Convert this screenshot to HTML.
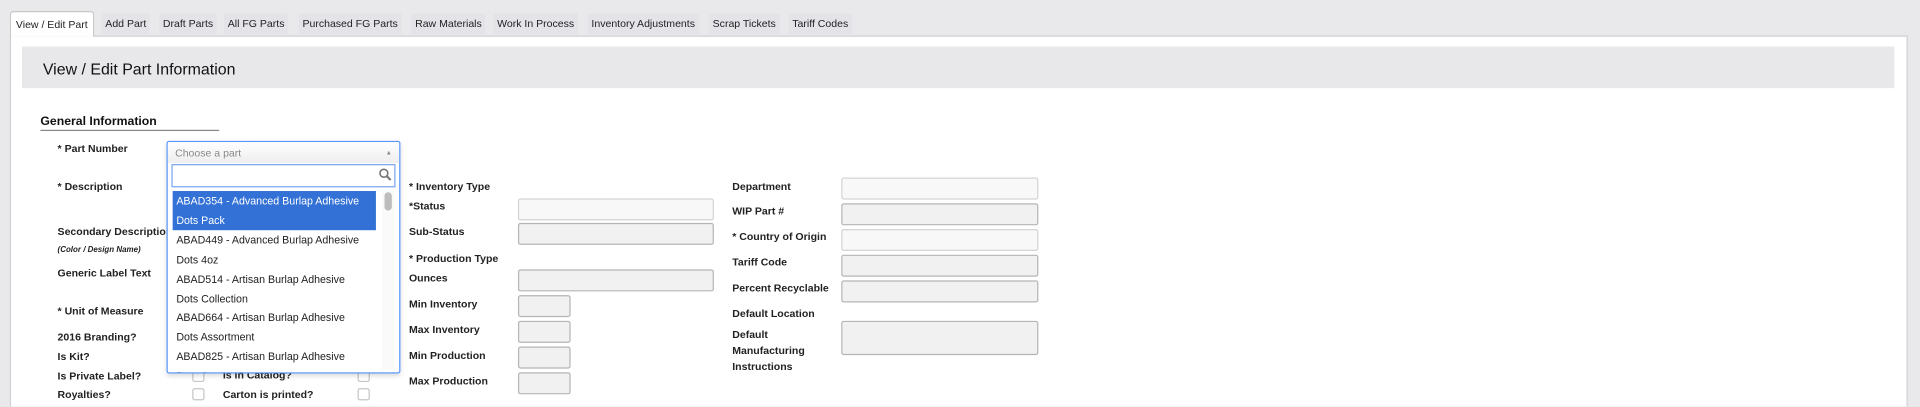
<!DOCTYPE html>
<html><head><meta charset="utf-8"><style>
html,body{margin:0;padding:0;width:1920px;height:407px;overflow:hidden;background:#e9e9ec;font-family:"Liberation Sans",Arial,sans-serif;}
#s{position:absolute;left:0;top:0;width:1568px;height:332px;overflow:hidden;transform:scale(1.2245);transform-origin:0 0;}
.a{position:absolute;white-space:nowrap;}
.tab{position:absolute;top:11px;height:17px;font-size:8.6px;line-height:17px;color:#222;background:#e4e4e8;padding:0 3px;}
.tab.act{background:#fff;border:1px solid #c8c8c8;border-bottom:none;top:9px;height:20px;line-height:20px;border-radius:3px 3px 0 0;}
.panel{position:absolute;left:8px;top:29px;width:1548px;height:310px;background:#fff;border:1px solid #cfcfd3;border-bottom:none;}
.l{position:absolute;font-size:8.6px;font-weight:bold;color:#222;white-space:nowrap;}
.in{position:absolute;height:16px;border:1px solid #b5b5b5;border-radius:2px;background:#f1f1f1;}
.in.lt{background:#f8f8f8;border-color:#d4d4d4;}
.cb{position:absolute;width:8px;height:8px;border:1px solid #c6c6c6;border-radius:2px;background:#fff;}
.it{position:absolute;left:4px;width:163px;font-size:8.7px;color:#222;line-height:16px;padding-left:3px;}
</style></head><body><div id="s">
<div class="panel"></div>
<div class="tab act" style="left:8px;padding:0 4px;">View / Edit Part</div>
<div class="tab" style="left:83px">Add Part</div>
<div class="tab" style="left:130px">Draft Parts</div>
<div class="tab" style="left:183px">All FG Parts</div>
<div class="tab" style="left:244px">Purchased FG Parts</div>
<div class="tab" style="left:336px">Raw Materials</div>
<div class="tab" style="left:403px">Work In Process</div>
<div class="tab" style="left:480px">Inventory Adjustments</div>
<div class="tab" style="left:579px">Scrap Tickets</div>
<div class="tab" style="left:644px">Tariff Codes</div>

<div class="a" style="left:18px;top:38px;width:1529px;height:34px;background:#e8e8eb;"></div>
<div class="a" style="left:35px;top:49px;font-size:13px;color:#111;">View / Edit Part Information</div>

<div class="a" style="left:33px;top:94px;font-size:10px;font-weight:bold;color:#111;">General Information</div>
<div class="a" style="left:33px;top:106px;width:146px;height:1px;background:#888;"></div>

<div class="l" style="left:47px;top:116px">* Part Number</div>
<div class="l" style="left:47px;top:147px">* Description</div>
<div class="l" style="left:47px;top:184px">Secondary Description</div>
<div class="l" style="left:47px;top:201px;font-size:6.5px;font-style:italic">(Color / Design Name)</div>
<div class="l" style="left:47px;top:218px">Generic Label Text</div>
<div class="l" style="left:47px;top:249px">* Unit of Measure</div>
<div class="l" style="left:47px;top:270px">2016 Branding?</div>
<div class="l" style="left:47px;top:286px">Is Kit?</div>
<div class="l" style="left:47px;top:302px">Is Private Label?</div>
<div class="l" style="left:47px;top:317px">Royalties?</div>
<div class="cb" style="left:157px;top:302px"></div><div class="cb" style="left:157px;top:317px"></div>
<div class="l" style="left:182px;top:301px">Is in Catalog?</div>
<div class="l" style="left:182px;top:317px">Carton is printed?</div>
<div class="cb" style="left:292px;top:302px"></div><div class="cb" style="left:292px;top:317px"></div>

<div class="a" style="left:136px;top:115px;width:189px;height:188px;background:#fff;border:1px solid #5897fb;border-radius:2px;box-shadow:0 2px 4px rgba(0,0,0,.15);overflow:hidden;">
 <div class="a" style="left:0;top:0;width:189px;height:17px;background:linear-gradient(#fff,#eee);"></div>
 <div class="a" style="left:6px;top:4px;font-size:8.6px;color:#888;">Choose a part</div>
 <div class="a" style="left:178px;top:6px;font-size:5px;color:#888;">▲</div>
 <div class="a" style="left:3px;top:18px;width:181px;height:17px;border:1px solid #7aa6ef;background:#fff;"></div>
 <svg class="a" style="left:172px;top:21px" width="11" height="11" viewBox="0 0 11 11"><circle cx="4.5" cy="4.5" r="3.2" fill="none" stroke="#777" stroke-width="1.3"/><path d="M7 7l3 3" stroke="#777" stroke-width="1.8"/></svg>
 <div class="it" style="top:40px;height:32px;background:#3371d6;color:#fff;">ABAD354 - Advanced Burlap Adhesive<br>Dots Pack</div>
 <div class="it" style="top:72px">ABAD449 - Advanced Burlap Adhesive<br>Dots 4oz</div>
 <div class="it" style="top:104px">ABAD514 - Artisan Burlap Adhesive<br>Dots Collection</div>
 <div class="it" style="top:135px">ABAD664 - Artisan Burlap Adhesive<br>Dots Assortment</div>
 <div class="it" style="top:167px">ABAD825 - Artisan Burlap Adhesive<br>Dots Studio Kit</div>
 <div class="a" style="left:0;top:186px;width:189px;height:2px;background:#fff;"></div>
 <div class="a" style="left:175px;top:40px;width:10px;height:146px;background:#fafafa;"></div>
 <div class="a" style="left:177px;top:41px;width:6px;height:15px;background:#bdbdbd;border-radius:3px;"></div>
</div>

<div class="l" style="left:334px;top:147px">* Inventory Type</div>
<div class="l" style="left:334px;top:163px">*Status</div>
<div class="l" style="left:334px;top:184px">Sub-Status</div>
<div class="l" style="left:334px;top:206px">* Production Type</div>
<div class="l" style="left:334px;top:222px">Ounces</div>
<div class="l" style="left:334px;top:243px">Min Inventory</div>
<div class="l" style="left:334px;top:264px">Max Inventory</div>
<div class="l" style="left:334px;top:285px">Min Production</div>
<div class="l" style="left:334px;top:306px">Max Production</div>
<div class="in lt" style="left:423px;top:162px;width:158px"></div>
<div class="in" style="left:423px;top:182px;width:158px"></div>
<div class="in" style="left:423px;top:220px;width:158px"></div>
<div class="in" style="left:423px;top:241px;width:41px"></div>
<div class="in" style="left:423px;top:262px;width:41px"></div>
<div class="in" style="left:423px;top:283px;width:41px"></div>
<div class="in" style="left:423px;top:304px;width:41px"></div>

<div class="l" style="left:598px;top:147px">Department</div>
<div class="l" style="left:598px;top:167px">WIP Part #</div>
<div class="l" style="left:598px;top:188px">* Country of Origin</div>
<div class="l" style="left:598px;top:209px">Tariff Code</div>
<div class="l" style="left:598px;top:230px">Percent Recyclable</div>
<div class="l" style="left:598px;top:251px">Default Location</div>
<div class="l" style="left:598px;top:267px;line-height:13px">Default<br>Manufacturing<br>Instructions</div>
<div class="in lt" style="left:687px;top:145px;width:159px"></div>
<div class="in" style="left:687px;top:166px;width:159px"></div>
<div class="in lt" style="left:687px;top:187px;width:159px"></div>
<div class="in" style="left:687px;top:208px;width:159px"></div>
<div class="in" style="left:687px;top:229px;width:159px"></div>
<div class="in" style="left:687px;top:262px;width:159px;height:26px"></div>
</div></body></html>
